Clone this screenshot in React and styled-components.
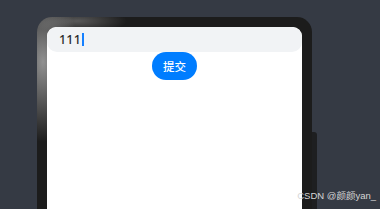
import React from 'react';
import styled, { createGlobalStyle } from 'styled-components';

const GlobalStyle = createGlobalStyle`
    html, body {
        margin: 0;
        padding: 0;
        background: #353a44;
        overflow: hidden;
    }
    body {
        width: 380px;
        height: 209px;
    }
`;

const Stage = styled.div`
    position: relative;
    width: 380px;
    height: 209px;
    padding: 17px 0 0 37px;
    box-sizing: border-box;
    overflow: hidden;
`;

const Device = styled.div`
    display: flex;
    align-items: flex-start;
`;

const Frame = styled.div`
    width: 275px;
    height: 260px;
    box-sizing: border-box;
    padding: 10px 10px 0 10px;
    border-radius: 15px;
    background:
        radial-gradient(ellipse 36px 80px at 6px 45px, rgba(175, 175, 175, 0.8), rgba(28, 28, 28, 0) 100%),
        radial-gradient(ellipse 50px 12px at 40px 4px, rgba(150, 150, 150, 0.5), rgba(28, 28, 28, 0) 100%),
        #1c1c1c;
`;

const SideKey = styled.div`
    width: 5px;
    height: 90px;
    margin-top: 115px;
    background: #1e1f21;
    border-radius: 0 3px 3px 0;
`;

const Screen = styled.div`
    height: 100%;
    background: #ffffff;
    border-radius: 9px 9px 0 0;
    display: flex;
    flex-direction: column;
    align-items: center;
    overflow: hidden;
`;

const InputBox = styled.div`
    align-self: stretch;
    height: 25px;
    background: #f1f3f5;
    border-radius: 10px;
    display: flex;
    align-items: center;
    padding-left: 12px;
    font-family: "Noto Sans", "Liberation Sans", sans-serif;
    font-size: 12.5px;
    font-weight: 500;
    color: #2b2b2b;
    letter-spacing: 0.2px;
`;

const Caret = styled.span`
    display: inline-block;
    width: 2px;
    height: 13px;
    margin-left: 0.5px;
    background: #1580ff;
`;

const SubmitButton = styled.button`
    width: 45px;
    height: 28px;
    border: none;
    border-radius: 14px;
    background: #007dff;
    color: #ffffff;
    font-family: "Noto Sans CJK SC", "Noto Sans", sans-serif;
    font-size: 11.5px;
    font-weight: 500;
    padding: 0;
    cursor: pointer;
`;

const Watermark = styled.div`
    position: absolute;
    right: 4px;
    bottom: 7px;
    font-family: "Liberation Sans", "Noto Sans CJK SC", sans-serif;
    font-size: 9.5px;
    color: #d6d6d6;
    white-space: nowrap;
`;

function App() {
    return (
        <>
            <GlobalStyle />
            <Stage>
                <Device>
                    <Frame>
                        <Screen>
                            <InputBox>
                                111<Caret />
                            </InputBox>
                            <SubmitButton>提交</SubmitButton>
                        </Screen>
                    </Frame>
                    <SideKey />
                </Device>
                <Watermark>CSDN @颜颜yan_</Watermark>
            </Stage>
        </>
    );
}

export default App;
